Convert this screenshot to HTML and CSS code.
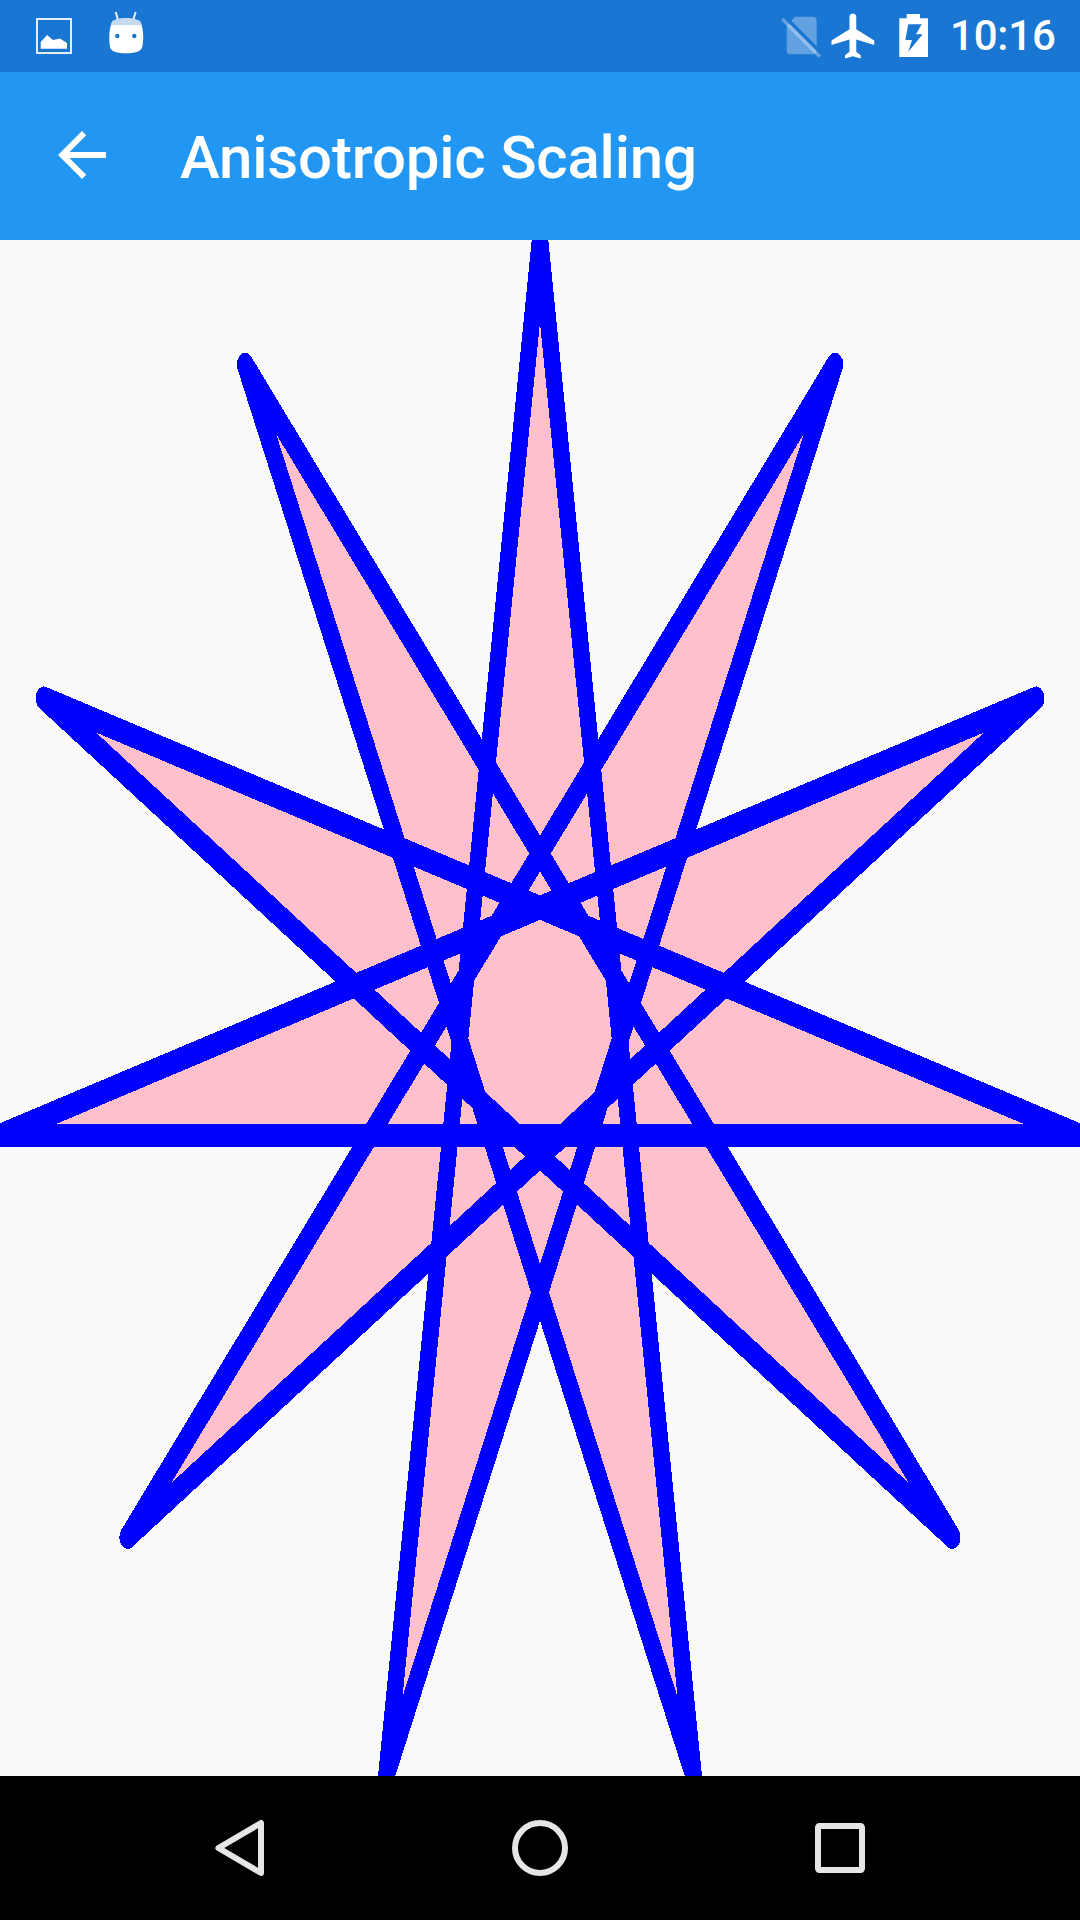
FILE: index.html
```html
<!DOCTYPE html>
<html lang="en">
  <head>
    <meta charset="UTF-8" />
    <meta name="viewport" content="width=device-width, initial-scale=1.0" />
    <title>Anisotropic Scaling</title>
    <link rel="stylesheet" href="styles.css">
  </head>
  <body>
    <div class="phone">
      <div class="status-bar">
        <svg class="icon-picture" viewBox="36 0 36 72">
          <rect x="37" y="19" width="34" height="34" fill="none" stroke="#e3eefa" stroke-width="2" />
          <path d="M40.7 42 L47 35 L53 40 L60 38.5 L67 43 V48.7 H40.7 Z" fill="#fff" />
        </svg>
        <svg class="icon-android" viewBox="108 0 36 72">
          <path d="M115.7 12 L118.3 21 M135.7 12 L132.9 21" stroke="#e8f0fa" stroke-width="2" fill="none" />
          <path d="M112 22 C116 17 136 17 140.5 22 C143 28 144 36 142.5 46 C141.5 51 137 53.3 126 53.3 C115 53.3 110.5 51 109.8 46 C108.5 36 109.5 28 112 22 Z" fill="#fff" />
          <path d="M112 22 C116 17 136 17 140.5 22 L141.6 25 H110.9 Z" fill="#c5d9f0" />
          <circle cx="117.3" cy="36" r="2.2" fill="#1976d2" />
          <circle cx="134.3" cy="36" r="2.2" fill="#1976d2" />
        </svg>
        <div class="status-right">
          <svg class="icon-nosim" viewBox="780 0 44 72">
            <path d="M795 16.7 H813 Q816.7 16.7 816.7 20.5 V50.5 Q816.7 54.3 813 54.3 H790.5 Q786.7 54.3 786.7 50.5 V26 Z" fill="#fff" opacity="0.32" />
            <path d="M785 17 L822 54" stroke="#1976d2" stroke-width="3.5" />
            <path d="M782.3 19 L820 56.7" stroke="#fff" stroke-width="3.5" opacity="0.32" />
          </svg>
          <svg class="icon-plane" viewBox="0 0 24 24">
            <path d="M21 16v-2l-8-5V3.5c0-.83-.67-1.5-1.5-1.5S10 2.67 10 3.5V9l-8 5v2l8-2.5V19l-2 1.5V22l3.5-1 3.5 1v-1.5L13 19v-5.5l8 2.5z" fill="#fff" />
          </svg>
          <svg class="icon-battery" viewBox="896 0 36 72">
            <path d="M906.7 14 H920 V18.3 H928 V57 H899.3 V18.3 H906.7 Z" fill="#fff" />
            <path d="M908.3 24.3 H921.7 L916 34.3 H922.7 L908.3 51.7 L912 40 H905.3 Z" fill="#1976d2" />
          </svg>
          <span class="clock">10:16</span>
        </div>
      </div>

      <div class="app-bar">
        <svg class="back-arrow" viewBox="0 0 24 24">
          <path d="M20 11H7.83l5.59-5.59L12 4l-8 8 8 8 1.41-1.41L7.83 13H20v-2z" fill="#fff" />
        </svg>
        <h1 class="app-title">Anisotropic Scaling</h1>
      </div>

      <div class="canvas">
        <!-- 11 point star, path bounds stretched to fill the canvas -->
        <svg class="star" viewBox="-98.982 -100 197.964 195.949" preserveAspectRatio="none">
          <polygon
            points="0,-100 28.173,95.949 -54.064,-84.125 75.575,65.486 -90.963,-41.542 98.982,14.231 -98.982,14.231 90.963,-41.542 -75.575,65.486 54.064,-84.125 -28.173,95.949"
          />
        </svg>
      </div>

      <div class="nav-bar">
        <div class="nav-item">
          <svg class="nav-icon" viewBox="0 0 60 60">
            <path d="M8.4 30 L51 5 V55 Z" />
          </svg>
        </div>
        <div class="nav-item">
          <svg class="nav-icon" viewBox="0 0 60 60">
            <circle cx="30" cy="30" r="25" />
          </svg>
        </div>
        <div class="nav-item">
          <svg class="nav-icon" viewBox="0 0 60 60">
            <rect x="8" y="8" width="44" height="44" rx="1.5" />
          </svg>
        </div>
      </div>
    </div>
  </body>
</html>
```

FILE: styles.css
```css
body {
  margin: 0;
  padding: 0;
  font-family: "Roboto", sans-serif;
  background-color: #fafafa;
}

.phone {
  width: 1080px;
  height: 1920px;
  display: flex;
  flex-direction: column;
  overflow: hidden;
}

/* status bar */
.status-bar {
  height: 72px;
  flex: none;
  display: flex;
  align-items: center;
  background-color: #1976d2;
  color: #ffffff;
}

.status-bar svg {
  display: block;
  flex: none;
  height: 72px;
}

.icon-picture {
  width: 36px;
  margin-left: 36px;
}

.icon-android {
  width: 36px;
  margin-left: 36px;
}

.status-right {
  margin-left: auto;
  display: flex;
  align-items: center;
}

.icon-nosim {
  width: 44px;
}

.status-bar .icon-plane {
  width: 54px;
  height: 54px;
  margin-left: 2.5px;
  margin-top: -1px;
}

.icon-battery {
  width: 36px;
  margin-left: 15.5px;
}

.clock {
  width: 130px;
  margin-left: 18px;
  font-size: 42px;
  font-weight: 500;
  line-height: 72px;
  letter-spacing: -0.2px;
}

/* app bar */
.app-bar {
  height: 168px;
  flex: none;
  display: flex;
  align-items: center;
  background-color: #2196f3;
  box-sizing: border-box;
  padding: 0 0 2px 46px;
}

.back-arrow {
  width: 72px;
  height: 72px;
  flex: none;
}

.app-title {
  margin: 5px 0 0 62px;
  font-size: 60px;
  font-weight: 500;
  letter-spacing: -0.2px;
  color: #ffffff;
}

/* drawing surface */
.canvas {
  flex: 1;
  background-color: #fafafa;
  overflow: hidden;
}

.star {
  display: block;
  width: 1080px;
  height: 1536px;
  shape-rendering: crispEdges;
}

.star polygon {
  fill: #ffc0cb;
  stroke: #0000ff;
  stroke-width: 3;
  stroke-linejoin: round;
}

/* nav bar */
.nav-bar {
  height: 144px;
  flex: none;
  display: flex;
  padding: 0 90px;
  background-color: #000000;
}

.nav-item {
  width: 300px;
  display: flex;
  align-items: center;
  justify-content: center;
}

.nav-icon {
  width: 60px;
  height: 60px;
  fill: none;
  stroke: #e6e6e6;
  stroke-width: 6;
  stroke-linejoin: round;
}
```
